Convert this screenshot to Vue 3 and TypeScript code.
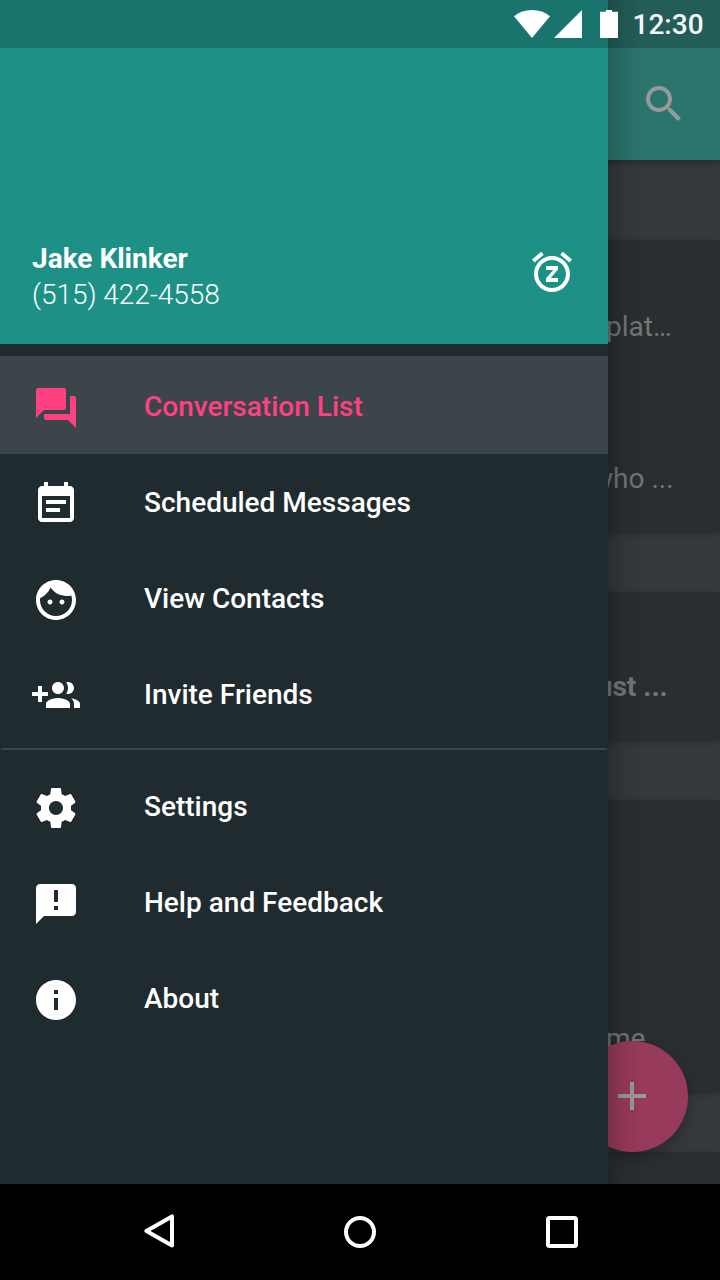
<script setup lang="ts">
interface DrawerItem {
  label: string
  path: string
  selected?: boolean
}

const primaryItems: DrawerItem[] = [
  {
    label: 'Conversation List',
    selected: true,
    path: 'M21 6h-2v9H6v2c0 .55.45 1 1 1h11l4 4V7c0-.55-.45-1-1-1zm-4 6V3c0-.55-.45-1-1-1H3c-.55 0-1 .45-1 1v14l4-4h10c.55 0 1-.45 1-1z',
  },
  {
    label: 'Scheduled Messages',
    path: 'M17 10H7v2h10v-2zm2-7h-1V1h-2v2H8V1H6v2H5c-1.11 0-1.99.9-1.99 2L3 19c0 1.1.89 2 2 2h14c1.1 0 2-.9 2-2V5c0-1.1-.9-2-2-2zm0 16H5V8h14v11zm-5-5H7v2h7v-2z',
  },
  {
    label: 'View Contacts',
    path: 'M9 11.75c-.69 0-1.25.56-1.25 1.25s.56 1.25 1.25 1.25 1.25-.56 1.25-1.25-.56-1.25-1.25-1.25zm6 0c-.69 0-1.25.56-1.25 1.25s.56 1.25 1.25 1.25 1.25-.56 1.25-1.25-.56-1.25-1.25-1.25zM12 2C6.48 2 2 6.48 2 12s4.48 10 10 10 10-4.48 10-10S17.52 2 12 2zm0 18c-4.41 0-8-3.59-8-8 0-.29.02-.58.05-.86 2.36-1.05 4.23-2.98 5.21-5.37C11.07 8.33 14.05 10 17.42 10c.78 0 1.53-.09 2.25-.26.21.71.33 1.47.33 2.26 0 4.41-3.59 8-8 8z',
  },
  {
    label: 'Invite Friends',
    path: 'M8 10H5V7H3v3H0v2h3v3h2v-3h3v-2zm10 1c1.66 0 2.99-1.34 2.99-3S19.66 5 18 5c-.32 0-.63.05-.91.14.57.81.9 1.79.9 2.86s-.34 2.04-.9 2.86c.28.09.59.14.91.14zm-5 0c1.66 0 2.99-1.34 2.99-3S14.66 5 13 5c-1.66 0-3 1.34-3 3s1.34 3 3 3zm6.62 2.16c.83.73 1.38 1.66 1.38 2.84v2h3v-2c0-1.54-2.37-2.49-4.38-2.84zM13 13c-2 0-6 1-6 3v2h12v-2c0-2-4-3-6-3z',
  },
]

const secondaryItems: DrawerItem[] = [
  {
    label: 'Settings',
    path: 'M19.43 12.98c.04-.32.07-.64.07-.98s-.03-.66-.07-.98l2.11-1.65c.19-.15.24-.42.12-.64l-2-3.46c-.12-.22-.39-.3-.61-.22l-2.49 1c-.52-.4-1.08-.73-1.69-.98l-.38-2.65C14.46 2.18 14.25 2 14 2h-4c-.25 0-.46.18-.49.42l-.38 2.65c-.61.25-1.17.59-1.69.98l-2.49-1c-.23-.09-.49 0-.61.22l-2 3.46c-.13.22-.07.49.12.64l2.11 1.65c-.04.32-.07.65-.07.98s.03.66.07.98l-2.11 1.65c-.19.15-.24.42-.12.64l2 3.46c.12.22.39.3.61.22l2.49-1c.52.4 1.08.73 1.69.98l.38 2.65c.03.24.24.42.49.42h4c.25 0 .46-.18.49-.42l.38-2.65c.61-.25 1.17-.59 1.69-.98l2.49 1c.23.09.49 0 .61-.22l2-3.46c.12-.22.07-.49-.12-.64l-2.11-1.65zM12 15.5c-1.93 0-3.5-1.57-3.5-3.5s1.57-3.5 3.5-3.5 3.5 1.57 3.5 3.5-1.57 3.5-3.5 3.5z',
  },
  {
    label: 'Help and Feedback',
    path: 'M20 2H4c-1.1 0-1.99.9-1.99 2L2 22l4-4h14c1.1 0 2-.9 2-2V4c0-1.1-.9-2-2-2zm-7 13h-2v-2h2v2zm0-4h-2V5h2v6z',
  },
  {
    label: 'About',
    path: 'M12 2C6.48 2 2 6.48 2 12s4.48 10 10 10 10-4.48 10-10S17.52 2 12 2zm1 15h-2v-6h2v6zm0-8h-2V7h2v2z',
  },
]
</script>

<template>
  <div class="phone">
    <div class="stage">
      <div class="screen">
        <header class="app-bar">
          <svg class="icon search" viewBox="0 0 24 24">
            <path d="M15.5 14h-.79l-.28-.27C15.41 12.59 16 11.11 16 9.5 16 5.91 13.09 3 9.5 3S3 5.91 3 9.5 5.91 16 9.5 16c1.61 0 3.09-.59 4.23-1.57l.27.28v.79l5 4.99L20.49 19l-4.99-5zm-6 0C7.01 14 5 11.99 5 9.5S7.01 5 9.5 5 14 7.01 14 9.5 11.99 14 9.5 14z" />
          </svg>
        </header>
        <div class="conversations">
          <section class="card">
            <div class="row"><span class="snippet">plat…</span></div>
            <div class="row second"><span class="snippet who">who ...</span></div>
          </section>
          <section class="card">
            <div class="row unread"><span class="snippet just">just ...</span></div>
          </section>
          <section class="card">
            <div class="row"></div>
            <div class="row second"><span class="snippet">me</span></div>
          </section>
          <section class="card last"></section>
        </div>
      </div>

      <div class="fab">
        <svg viewBox="0 0 28 28"><path d="M12 0h4v12h12v4H16v12h-4V16H0v-4h12z" /></svg>
      </div>

      <aside class="drawer">
        <div class="profile">
          <div class="identity">
            <div class="name">Jake Klinker</div>
            <div class="number">(515) 422-4558</div>
          </div>
          <svg class="icon snooze" viewBox="0 0 24 24">
            <path d="M7.88 3.39L6.6 1.86 2 5.71l1.29 1.53 4.59-3.85zM22 5.72l-4.6-3.86-1.29 1.53 4.6 3.86L22 5.72zM12 4c-4.97 0-9 4.03-9 9s4.02 9 9 9c4.97 0 9-4.03 9-9s-4.03-9-9-9zm0 16c-3.87 0-7-3.13-7-7s3.13-7 7-7 7 3.13 7 7-3.13 7-7 7zm-3-9h3.63L9 15.2V17h6v-2h-3.63L15 10.8V9H9v2z" />
          </svg>
        </div>
        <nav class="menu">
          <div v-for="item in primaryItems" :key="item.label" class="item" :class="{ selected: item.selected }">
            <svg class="icon" viewBox="0 0 24 24"><path :d="item.path" /></svg>
            <span class="label">{{ item.label }}</span>
          </div>
          <div class="divider"></div>
          <div v-for="item in secondaryItems" :key="item.label" class="item">
            <svg class="icon" viewBox="0 0 24 24"><path :d="item.path" /></svg>
            <span class="label">{{ item.label }}</span>
          </div>
        </nav>
      </aside>

      <div class="status-bar">
        <svg class="wifi" viewBox="0 0 36 28"><path d="M18 28L0 6.2C5 2.2 11.2 0 18 0s13 2.2 18 6.2z" /></svg>
        <svg class="signal" viewBox="0 0 28 28"><path d="M0 28H28V0z" /></svg>
        <svg class="battery" viewBox="0 0 18 28"><path d="M6 0h6v1.8h6V28H0V1.8h6z" /></svg>
        <span class="clock">12:30</span>
      </div>
    </div>

    <footer class="nav-bar">
      <svg class="back" viewBox="0 0 30 34"><path d="M28 2.4v29.2L2.4 17z" /></svg>
      <svg class="home" viewBox="0 0 32 32"><circle cx="16" cy="16" r="14" /></svg>
      <svg class="recent" viewBox="0 0 32 32"><rect x="2" y="2" width="28" height="28" rx="1.5" /></svg>
    </footer>
  </div>
</template>

<style>
body {
  margin: 0;
  background: #000;
}
</style>

<style scoped>
.phone {
  width: 720px;
  height: 1280px;
  display: flex;
  flex-direction: column;
  overflow: hidden;
  font-family: Roboto, "Noto Sans", sans-serif;
  font-size: 28px;
  line-height: 36px;
  color: #fff;
}
svg {
  display: block;
  flex: none;
}
.icon {
  width: 48px;
  height: 48px;
  fill: currentColor;
}
.stage {
  position: relative;
  height: 1184px;
  overflow: hidden;
}
.screen {
  height: 100%;
  display: flex;
  flex-direction: column;
  background: #35393c;
}
.app-bar {
  box-sizing: border-box;
  height: 160px;
  flex: none;
  padding: 80px 32px 0 0;
  display: flex;
  justify-content: flex-end;
  background: #2b756d;
  box-shadow: 0 2px 6px rgba(0, 0, 0, 0.3);
  color: #999;
}
.conversations {
  display: flex;
  flex-direction: column;
  gap: 60px;
  padding: 80px 0 0;
}
.card {
  background: #2a2e30;
  box-shadow: 0 2px 6px -1px rgba(0, 0, 0, 0.3);
}
.card.last {
  height: 32px;
}
.row {
  box-sizing: border-box;
  height: 142px;
  padding: 69px 0 0 606px;
  color: #747677;
}
.row.second {
  height: 150px;
  border-top: 1px solid #272b2d;
  padding-top: 78px;
}
.row.unread {
  height: 148px;
  padding-top: 77px;
  font-weight: 700;
}
.snippet {
  display: flex;
  white-space: pre;
}
.who {
  margin-left: -14px;
}
.just {
  margin-left: -16.5px;
}
.fab {
  position: absolute;
  left: 576.5px;
  top: 1040.5px;
  width: 111px;
  height: 111px;
  border-radius: 50%;
  display: flex;
  align-items: center;
  justify-content: center;
  background: #983a5b;
  box-shadow: 0 6px 14px rgba(0, 0, 0, 0.25);
}
.fab svg {
  width: 28px;
  height: 28px;
  fill: #999;
}
.drawer {
  position: absolute;
  left: 0;
  top: 0;
  width: 608px;
  height: 1184px;
  background: #202b30;
}
.drawer::after {
  content: "";
  position: absolute;
  left: 608px;
  top: 0;
  width: 36px;
  height: 1184px;
  background: linear-gradient(to right, rgba(0, 0, 0, 0.2), rgba(0, 0, 0, 0.07) 45%, transparent);
}
.profile {
  box-sizing: border-box;
  height: 344px;
  padding: 241px 32px 0;
  display: flex;
  justify-content: space-between;
  background: #1e9187;
}
.name {
  font-weight: 700;
}
.number {
  font-weight: 300;
  letter-spacing: -0.04px;
}
.snooze {
  margin-top: 7px;
}
.menu {
  padding-top: 12px;
}
.item {
  box-sizing: border-box;
  height: 96px;
  padding: 4px 32px 0;
  display: flex;
  align-items: center;
  gap: 64px;
}
.item.selected {
  height: 98px;
  padding-top: 6px;
  background: #3c454a;
  color: #ff4081;
}
.label {
  font-weight: 500;
  padding-bottom: 2px;
}
.divider {
  height: 2px;
  margin: 6px 1px 8px;
  background: #3c464c;
}
.status-bar {
  position: absolute;
  left: 0;
  top: 0;
  box-sizing: border-box;
  width: 720px;
  height: 48px;
  padding: 10px 16px 0 514px;
  display: flex;
  background: rgba(0, 0, 0, 0.2);
  fill: #fff;
}
.wifi {
  width: 36px;
  height: 28px;
}
.signal {
  width: 28px;
  height: 28px;
  margin-left: 4px;
}
.battery {
  width: 18px;
  height: 28px;
  margin-left: 18px;
}
.clock {
  margin-left: 14.5px;
  line-height: 30px;
  font-weight: 500;
  color: #f4f7f7;
}
.nav-bar {
  box-sizing: border-box;
  height: 96px;
  padding-left: 144px;
  display: flex;
  align-items: center;
  background: #000;
  fill: none;
  stroke: #fff;
  stroke-width: 4;
  stroke-linejoin: round;
}
.back {
  width: 30px;
  height: 34px;
  margin-bottom: 2px;
}
.home {
  width: 32px;
  height: 32px;
  margin-left: 170px;
}
.recent {
  width: 32px;
  height: 32px;
  margin-left: 170px;
}
</style>
